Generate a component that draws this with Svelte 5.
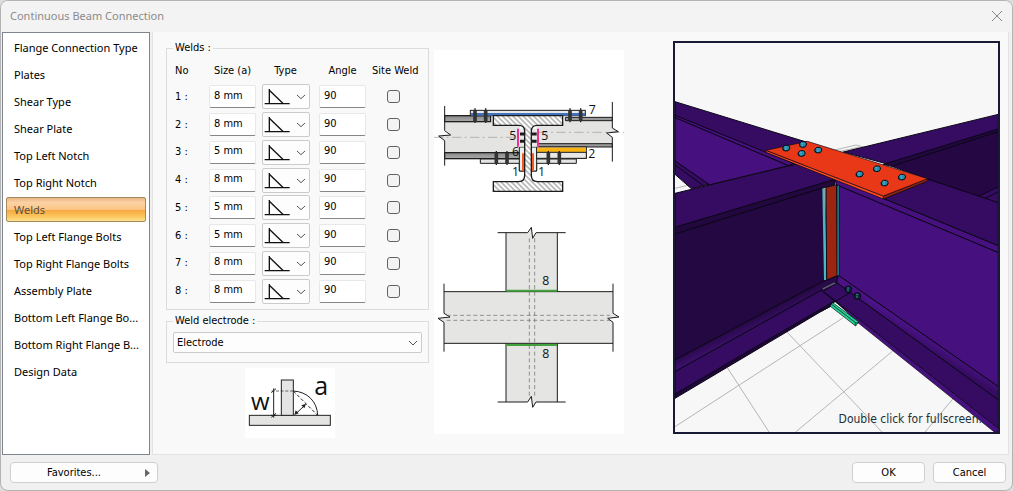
<script>
  const pages = [
    'Flange Connection Type', 'Plates', 'Shear Type', 'Shear Plate', 'Top Left Notch',
    'Top Right Notch', 'Welds', 'Top Left Flange Bolts', 'Top Right Flange Bolts',
    'Assembly Plate', 'Bottom Left Flange Bo...', 'Bottom Right Flange B...', 'Design Data'
  ];
  let current = $state('Welds');
  let welds = $state([8, 8, 5, 8, 5, 5, 8, 8].map((s) => ({ size: `${s} mm`, angle: '90', site: false })));
  const topBolts = [[348, 339], [398, 328], [394, 355], [444, 345], [568, 417], [620, 401], [643, 444], [695, 426]];
  const sectionBolts = [[135, 190, 234], [167, 190, 234], [420, 190, 232], [452, 190, 232], [199, 318, 360], [231, 318, 360], [355, 318, 360], [388, 318, 360]];
</script>

<div class="window">
  <header>
    <h1>Continuous Beam Connection</h1>
    <button class="close" aria-label="Close">
      <svg width="12" height="12" viewBox="0 0 12 12"><path d="M1 1L11 11M11 1L1 11" stroke="#858585" fill="none" /></svg>
    </button>
  </header>

  <div class="body">
    <nav>
      {#each pages as page}
        <button class:active={page === current} onclick={() => (current = page)}>{page}</button>
      {/each}
    </nav>

    <main>
      <div class="form">
        <fieldset class="welds">
          <legend>Welds :</legend>
          <table>
            <thead>
              <tr><th class="no">No</th><th class="size">Size (a)</th><th class="type">Type</th><th class="angle">Angle</th><th class="site">Site Weld</th></tr>
            </thead>
            <tbody>
              {#each welds as weld, i}
                <tr>
                  <td class="no">{i + 1} :</td>
                  <td><input class="field" aria-label="Size of weld {i + 1}" bind:value={weld.size} /></td>
                  <td>
                    <div class="picker">
                      <select aria-label="Type of weld {i + 1}"><option value="fillet" aria-label="Fillet"></option></select>
                      <svg viewBox="0 0 144 75" width="48" height="25" fill="none">
                        <path d="M8 59H83M22 15V59M22 19L64 59" stroke="#111" stroke-width="4" />
                        <path d="M105 33l12 11l12-11" stroke="#555" stroke-width="3" />
                      </svg>
                    </div>
                  </td>
                  <td><input class="field" aria-label="Angle of weld {i + 1}" bind:value={weld.angle} /></td>
                  <td class="site"><input type="checkbox" aria-label="Site weld {i + 1}" bind:checked={weld.site} /></td>
                </tr>
              {/each}
            </tbody>
          </table>
        </fieldset>

        <fieldset class="electrode">
          <legend><label for="electrode">Weld electrode :</label></legend>
          <div class="combo">
            <select id="electrode"><option>Electrode</option></select>
            <svg width="10" height="6" viewBox="0 0 10 6"><path d="M1 1L5 5L9 1" fill="none" stroke="#555" /></svg>
          </div>
        </fieldset>

        <svg class="symbol" viewBox="30 25 270 210" width="90" height="70" fill="none" stroke="#222" stroke-width="3">
          <rect x="30" y="25" width="270" height="210" fill="#fff" stroke="none" />
          <rect x="43" y="167" width="243" height="30" fill="#e4e4e2" />
          <rect x="139" y="61" width="36" height="106" fill="#e4e4e2" />
          <path d="M116 86V174M107 167H124M109 99l14-12M109 173l14-12" />
          <path d="M109 94H175" stroke-dasharray="9 5" stroke-width="2" />
          <path d="M175 94C217 96 247 126 248 167" />
          <path d="M175 94L248 167" stroke-dasharray="10 6" />
          <path d="M184 161L207 139" />
          <path d="M178 166l4-14l9 9zM213 132l-14 5l9 9z" fill="#222" stroke="none" />
          <text x="48" y="150" font-size="72">w</text>
          <text x="238" y="107" font-size="75">a</text>
        </svg>
      </div>

      <svg class="drawing" viewBox="12 15 570 1152" width="190" height="384" fill="none" stroke="#1c1c1c" stroke-width="3">
        <defs>
          <pattern id="hatch" width="11" height="11" patternUnits="userSpaceOnUse" patternTransform="rotate(-45)">
            <rect width="11" height="11" fill="#fff" stroke="none" />
            <path d="M3 0V11" stroke="#444" stroke-width="2" />
          </pattern>
          <linearGradient id="flangeGrey" x2="0" y2="1">
            <stop stop-color="#888" /><stop offset="1" stop-color="#aaa" />
          </linearGradient>
        </defs>
        <rect x="12" y="15" width="570" height="1152" fill="#fff" stroke="none" />

        <!-- side section -->
        <path d="M44 212H182V229H270V341H44V290L26 273L62 269L44 252Z" fill="#e4e4e3" stroke="none" />
        <path d="M320 229H406V217H547V249L566 260L530 264L547 276V306H320Z" fill="#e4e4e3" stroke="none" />
        <rect x="44" y="212" width="138" height="18" fill="url(#flangeGrey)" />
        <rect x="44" y="323" width="226" height="18" fill="url(#flangeGrey)" />
        <path d="M44 212H182V230H44M44 323H270V341H44" />
        <path d="M406 217H547V227H406ZM322 296H547V306H322" fill="#999" />
        <path d="M12 277H266M325 262H582" stroke="#999" stroke-dasharray="28 10 6 10" stroke-width="2" />
        <path d="M44 183V257L62 270L26 273L44 287V362M547 171V249L565 260L530 264L547 277V350" />
        <rect x="121" y="196" width="345" height="16" fill="#e8e8e8" />
        <rect x="123" y="204" width="342" height="8" fill="#3f72bf" stroke="none" />
        <path d="M151 342H439V355H320V378H268V355H151Z" fill="#e2e5e2" />
        <path d="M268 306H320V378H268Z" fill="#eee" />
        <rect x="320" y="306" width="149" height="34" fill="#eee" />
        <rect x="321" y="308" width="147" height="14" fill="#f9b414" stroke="none" />
        <rect x="320" y="322" width="149" height="18" fill="#e8e8e6" />
        <rect x="263" y="251" width="62" height="54" fill="#e8e8e8" stroke="none" />
        <path d="M264 251V305M324 251V305" stroke="#ee2f92" stroke-width="6" />
        <path d="M270 267H320M270 289H320" stroke-width="9" />
        <path d="M190 212H398V241H322Q304 241 304 259V391Q304 410 322 410H398V439H190V410H266Q284 410 284 391V259Q284 241 266 241H190Z" fill="url(#hatch)" stroke-width="4" />
        <path d="M279 325V378M309 325V378" stroke="#f45b20" stroke-width="6" />
        {#each sectionBolts as [x, top, bottom]}
          <path d="M{x} {top}V{bottom}" stroke-width="4" />
          <path d="M{x} {top + 5}V{bottom - 4}" stroke="#333" stroke-width="11" />
        {/each}

        <!-- plan -->
        <path d="M228 563H297L304 547L308 580L318 563H382V740H549V810L567 817L533 820L549 832V895H382V1071H318L308 1086L304 1055L293 1071H228V895H42V832L24 820L60 816L42 805V740H228Z" fill="#e5e5e4" stroke="none" />
        <path d="M228 740V563M382 563V740M228 895V1071M382 895V1071" />
        <path d="M42 740H549M42 895H549" />
        <path d="M203 563H293L304 547L308 580L318 563H407M203 1071H293L304 1054L308 1087L318 1071H407" />
        <path d="M42 716V805L60 816L24 820L42 832V920M549 716V805L567 816L533 820L549 832V920" />
        <path d="M229 737H381M229 900H381" stroke="#42a33c" stroke-width="6" />
        <path d="M298 580V1055M314 580V1060M50 811H540M50 826H540" stroke="#666" stroke-width="2" stroke-dasharray="12 8" />
        <g class="marks" font-size="37">
          <text x="476" y="206">7</text><text x="238" y="284">5</text><text x="334" y="284">5</text>
          <text x="246" y="333">6</text><text x="475" y="339">2</text><text x="246" y="393">1</text><text x="324" y="393">1</text>
          <text x="337" y="721">8</text><text x="337" y="940">8</text>
        </g>
      </svg>

      <div class="scene">
        <svg viewBox="15 24 969 1167" preserveAspectRatio="xMidYMid slice" stroke="#0b0618" stroke-width="3" fill="none">
          <defs>
            <linearGradient id="leftFillet" gradientUnits="userSpaceOnUse" x1="240" y1="850" x2="256" y2="882">
              <stop stop-color="#230840" /><stop offset="1" stop-color="#3b0f6b" />
            </linearGradient>
            <linearGradient id="rightFillet" gradientUnits="userSpaceOnUse" x1="750" y1="893" x2="732" y2="922">
              <stop stop-color="#4a1285" /><stop offset="1" stop-color="#350c61" />
            </linearGradient>
          </defs>
          <rect x="15" y="24" width="969" height="1167" fill="#f7f7f7" stroke="none" />
          <path d="M15 1175L520 848M172 998L297 1191M350 890L636 1191M377 1191L668 948M765 1191L850 1090M15 460L62 449M490 346L558 330L585 337M505 350L570 336" stroke="#b5b5b5" />

          <!-- rear left beam -->
          <path d="M15 200L412 322L400 400L355 392L15 241Z" fill="#350c61" />
          <path d="M15 241L370 385L355 392L15 248Z" fill="#47107f" />
          <path d="M15 248L355 392L117 450L15 378Z" fill="#47107f" />
          <path d="M15 378L117 448L64 461L15 418Z" fill="#350c61" />
          <path d="M15 390L100 452" />

          <!-- rear right beam -->
          <path d="M520 351L985 238V282L655 388Z" fill="#350c61" />
          <path d="M640 388L985 282V290L665 394Z" fill="#230840" />
          <path d="M665 394L985 290V505L775 433Z" fill="#250843" />
          <path d="M925 485L985 455V505Z" fill="#350c61" />
          <path d="M945 490L985 470" />

          <!-- front left beam -->
          <path d="M15 475L380 387L495 433L15 577Z" fill="#350c61" />
          <path d="M15 577L495 433V448L15 597Z" fill="#230840" />
          <path d="M15 597L460 458L465 735L15 975Z" fill="#240842" />
          <path d="M15 975L465 735L503 722L500 745L455 765L15 1010Z" fill="url(#leftFillet)" />
          <path d="M15 1010L455 765L500 742L540 775L495 800L15 1079Z" fill="#350c61" />
          <path d="M15 1077L490 800L485 812L452 830L15 1090Z" fill="#1f0738" />

          <!-- front right beam -->
          <path d="M495 433L640 490L985 632V653L500 450Z" fill="#47107f" />
          <path d="M640 490L775 433L985 503V632Z" fill="#350c61" />
          <path d="M500 450L985 653V1055L505 721Z" fill="#47107f" />
          <path d="M505 721L985 1055V1095L500 743Z" fill="url(#rightFillet)" />
          <path d="M500 743L985 1095V1180L495 797L460 769Z" fill="#350c61" />
          <path d="M495 797L985 1180V1191H973L565 864Z" fill="#47107f" stroke-width="2" />
          <path d="M455 767L530 828M495 800L540 773M452 830L485 812" />
          <path d="M455 760L492 741L500 745L460 765Z" fill="#64597a" stroke-width="2" />

          <!-- web cleat -->
          <path d="M468 457L500 449L502 722L470 735Z" fill="#9c2511" />
          <path d="M460 460L465 735" stroke="#48b8bf" stroke-width="6" />
          <path d="M465 460L470 735" stroke="#12101e" stroke-width="2" />
          <path d="M504 452V721" stroke="#1e858b" stroke-width="6" />
          <path d="M501 450V722M508 455V720" stroke-width="2" />

          <!-- bottom plate -->
          <path d="M488 803L566 860L557 873L480 813Z" fill="#21d392" stroke-width="2" />
          <path d="M485 808L558 864L566 862M556 864V872" stroke-width="2" />

          <!-- top plate -->
          <path d="M288 346V352L640 492L773 438V431L640 483Z" fill="#ff4b1b" stroke-width="2" />
          <path d="M640 483L773 431V438L640 492Z" fill="#8f2412" stroke-width="2" />
          <path d="M288 346L412 319L773 431L640 483Z" fill="#e93818" stroke-width="2" />

          {#each topBolts as [x, y]}
            <ellipse cx={x} cy={y + 2} rx="11" ry="8" fill="#0e3442" stroke="none" />
            <path d="M{x - 9} {y - 3}l6 -5h9l5 4v7l-6 5h-8l-6 -4z" fill="#248eac" stroke-width="3" />
            <path d="M{x - 4} {y - 3}h6M{x - 1} {y + 1}v6" stroke="#72c7d8" stroke-width="2" />
          {/each}
          {#each [[535, 763], [562, 783]] as [x, y]}
            <circle cx={x} cy={y} r="10" fill="#0d2635" />
            <path d="M{x - 4} {y - 4}h7M{x - 1} {y}v6" stroke="#3195a8" stroke-width="3" />
          {/each}
        </svg>
        <p>Double click for fullscreen.</p>
      </div>
    </main>
  </div>

  <footer>
    <button class="favorites"><span>Favorites...</span><i></i></button>
    <button>OK</button>
    <button>Cancel</button>
  </footer>
</div>

<style>
  :global(body) { background: #dcdcdc; }
  .window, .window * { box-sizing: border-box; }
  .window {
    display: flex; flex-direction: column; min-height: 100vh;
    border: 1px solid #b4b4b4; border-radius: 8px; overflow: hidden;
    background: #f0f0f0; color: #000;
    font: 11px/14px "DejaVu Sans Condensed", "DejaVu Sans", sans-serif;
  }
  button, input, select { font: inherit; color: inherit; margin: 0; border-radius: 0; }
  header { display: flex; align-items: center; justify-content: space-between; height: 31px; padding: 0 9px 2px 9px; background: #f3f3f3; }
  h1 { margin: 0; font: 11px/16px "Noto Sans", sans-serif; color: #8b8b8b; }
  .close { display: flex; padding: 0; border: 0; background: none; }
  .body { display: flex; flex: 1; padding: 0 3px 0 1px; }
  nav {
    display: flex; flex-direction: column; gap: 2px; flex: none; width: 148px; padding: 2px 3px;
    border: 1px solid #7f858f; background: #fff; font: 11px/14px "Noto Sans", sans-serif;
  }
  nav button { height: 25px; padding: 0 7px; border: 1px solid transparent; background: none; text-align: left; white-space: nowrap; border-radius: 2px; }
  nav .active {
    border-color: #a58a5c; color: #5c5040;
    background: linear-gradient(#e9b684, #fcd3a6 20%, #fbc584 50%, #f7a840 54%, #fbc45a 78%, #fee08a);
  }
  main {
    display: grid; grid-template-columns: 263px 190px minmax(0, 1fr); column-gap: 5px;
    flex: 1; margin-left: 2px; padding: 9px 8px 16px 13px;
    background: #f9f9f9; border: 1px solid #e3e3e3; border-top: 0;
  }
  .form { display: flex; flex-direction: column; }
  fieldset { margin: 0; padding: 0 6px; border: 1px solid #dcdcdc; min-width: 0; }
  legend { padding: 0 2px; }
  .welds { height: 269px; }
  table { width: 100%; height: 246px; margin-top: 4px; border-collapse: collapse; table-layout: fixed; }
  th, td { padding: 0; font-weight: normal; vertical-align: middle; }
  thead tr { height: 24px; }
  .no { width: 36px; text-align: left; padding-left: 2px; }
  .size, .type { width: 53px; padding-right: 6px; }
  .angle { width: 57px; padding-right: 2px; }
  th.site, td.site { padding-right: 8px; white-space: nowrap; }
  td { text-align: left; }
  .field { display: block; width: 47px; height: 23px; padding: 0 4px 3px; border: 1px solid #e8e8e8; border-bottom-color: #868686; border-radius: 2px; background: #fff; }
  td:nth-child(4) .field { margin-left: 4px; }
  .picker, .combo { display: grid; }
  .picker { width: 48px; }
  .picker > *, .combo > * { grid-area: 1 / 1; }
  select { appearance: none; width: 100%; border: 1px solid #cbcbcb; border-radius: 2px; background: #fdfdfd; }
  .picker select { height: 25px; }
  .picker svg, .combo svg { pointer-events: none; z-index: 1; }
  .site input { appearance: none; display: block; width: 13px; height: 13px; margin: 0 auto; border: 1px solid #626262; border-radius: 3px; background: #f3f3f3; }
  .electrode { margin-top: 4px; height: 49px; }
  .combo { align-items: center; margin-top: 4px; }
  .combo select { height: 21px; padding: 0 3px; }
  .combo svg { justify-self: end; margin-right: 4px; }
  .symbol { display: block; margin: 5px 0 0 79px; }
  .symbol text { fill: #111; stroke: none; font-family: "Open Sans", sans-serif; }
  .drawing { display: block; margin-top: 9px; }
  .marks { fill: #111; stroke: none; font-family: "Open Sans", sans-serif; }
  .scene { display: grid; margin-left: 44px; border: 2px solid #181a35; height: 393px; overflow: hidden; }
  .scene svg { grid-area: 1 / 1; width: 100%; height: 389px; }
  .scene p { grid-area: 1 / 1; align-self: end; justify-self: end; margin: 0 16px 5px 0; font-size: 12px; line-height: 16px; color: #203038; }
  footer { display: flex; align-items: center; gap: 8px; height: 35px; padding: 0 6px 0 9px; }
  footer button { height: 21px; width: 73px; padding: 0; border: 1px solid #cfcfcf; border-radius: 4px; background: #fdfdfd; }
  footer .favorites { display: flex; align-items: center; width: 148px; margin-right: auto; padding-right: 7px; }
  .favorites span { flex: 1; padding-right: 8px; }
  .favorites i { border: 4px solid transparent; border-left: 5px solid #666; border-right: 0; }
</style>
